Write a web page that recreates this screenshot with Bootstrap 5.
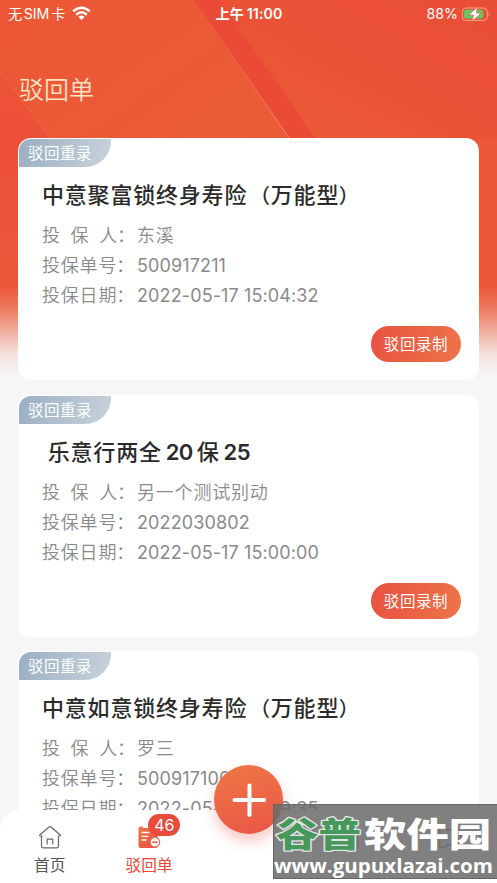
<!DOCTYPE html>
<html lang="zh-CN">
<head>
<meta charset="utf-8">
<meta name="viewport" content="width=device-width, initial-scale=1">
<title>驳回单</title>
<link href="https://cdn.jsdelivr.net/npm/bootstrap@5.3.0/dist/css/bootstrap.min.css" rel="stylesheet">
<style>
body{font-family:Inter,"Noto Sans CJK SC",sans-serif;background:#f6f6f6;overflow:hidden}
.screen{width:497px;height:883px}
.backdrop-art{left:0;top:0;z-index:0}
.layer{z-index:1}
.statusbar{height:27px;padding:0 7px 0 8px;color:#fff;font-size:14.2px;line-height:27px}
.status-side{width:170px}
.sim{word-spacing:-2.2px;letter-spacing:-.1px}
.clock{font-weight:600;word-spacing:-1px;letter-spacing:.1px;line-height:26px}
.page-title{font-size:25px;line-height:36px;font-weight:350;color:#ffe3c5;margin:45px 0 0 19px;padding-bottom:30px}
.orders{padding:0 18px;gap:14.6px}
.order{height:242px;border-radius:13px;width:461px;background:#fff}
.tagline{width:91.5px;height:28px;margin:1px 0 0 1px;padding-left:9px;border-radius:12px 0 26px 0;background:linear-gradient(105deg,#9aafc2,#c9d2dc);color:#fff;font-size:15.5px;letter-spacing:.5px;line-height:30px}
.order-name{height:32px;font-family:"Noto Sans CJK SC",sans-serif;font-size:22px;letter-spacing:.8px;line-height:32px;font-weight:500;color:#2b2b2b;margin:10px 0 0 24px;white-space:pre}
.num{font-family:Inter,sans-serif;font-weight:600;letter-spacing:-.6px;line-height:1;margin:0 4px 0 4px}
.paren-open{font-size:20px;margin-left:2.8px;letter-spacing:.8px}
.paren-close{font-size:20px;margin-left:-.6px}
.order-info{margin:12px 0 0 24px;font-size:18px;line-height:30px;color:#8a8a8a;font-weight:350}
.info-row{height:30px}
.info-key{width:95px;letter-spacing:.8px;white-space:nowrap}
.spread{width:76px}
.colon{margin-left:-1px}
.info-val{font-weight:400;letter-spacing:.12px;white-space:nowrap}
.info-cjk{letter-spacing:.8px;font-weight:350}
.order-info,.order-name,.tagline{flex:none}
.record-btn{width:90px;height:36px;margin:15px 18px 0 0;padding:0;border:0;color:#fff;font-size:15.5px;letter-spacing:.6px;line-height:37px;background:linear-gradient(100deg,#e95141,#ed7448)}
.record-btn:hover{color:#fff}
.tabbar-shade{left:0;bottom:0;width:497px;height:73px;z-index:2;background:#fff;border-radius:20px 20px 0 0}
.tab-item{width:99.4px;padding-top:15px;font-size:15.7px;line-height:22px;color:#555}
.tab-item svg{display:block;margin-bottom:5px}
.tab-item.current{color:#ea4638}
.count-badge{left:49px;top:4px;width:32px;height:22px;border-radius:11px;background:#e94b3c;color:#fff;font-size:16px;line-height:22px;text-align:center}
.add-btn{left:214px;top:765px;width:69px;height:69px;z-index:3;border:0;padding:0;background:linear-gradient(165deg,#ee7744,#ea5548);box-shadow:0 7px 14px rgba(225,75,60,.3)}
.stamp{left:273px;top:804px;z-index:4}
</style>
<script src="https://cdn.jsdelivr.net/npm/bootstrap@5.3.0/dist/js/bootstrap.bundle.min.js"></script>
</head>
<body>
<main class="screen position-relative overflow-hidden">
  <svg class="backdrop-art position-absolute" width="497" height="385" viewBox="0 0 497 385" aria-hidden="true">
    <defs>
      <linearGradient id="base" x1="0" y1="0" x2="0.9" y2="1"><stop offset="0" stop-color="#ed5635"/><stop offset=".45" stop-color="#ea5c38"/><stop offset="1" stop-color="#ea5c3a"/></linearGradient>
      <linearGradient id="right" x1="0" y1="1" x2="1" y2="0"><stop offset="0" stop-color="#ec5f39"/><stop offset=".5" stop-color="#eb5235"/><stop offset="1" stop-color="#e94d38"/></linearGradient>
      <linearGradient id="side" x1="0" y1="0" x2="0" y2="1"><stop offset="0" stop-color="#ed5336"/><stop offset=".3" stop-color="#ec5039"/><stop offset=".7" stop-color="#eb5839"/></linearGradient>
      <linearGradient id="hair" x1="0" y1="0" x2="0" y2="1"><stop offset="0" stop-color="#f08660" stop-opacity="0"/><stop offset="1" stop-color="#f29068"/></linearGradient>
      <linearGradient id="fade" x1="0" y1="0" x2="0" y2="1"><stop offset="0" stop-color="#f6f6f6" stop-opacity="0"/><stop offset=".25" stop-color="#f6f6f6" stop-opacity=".22"/><stop offset=".75" stop-color="#f6f6f6" stop-opacity=".88"/><stop offset="1" stop-color="#f6f6f6"/></linearGradient>
    </defs>
    <rect width="497" height="385" fill="url(#base)"/>
    <path d="M215 0H497V150H325Z" fill="url(#right)"/>
    <path d="M477 138H497V385H477Z" fill="#eb5838"/>
    <path d="M194 0H219L315 138H289Z" fill="#ea4a36"/>
    <path d="M194 0L289 138" stroke="url(#hair)" stroke-width="1"/>
    <path d="M0 71L50 138L18 150V385H0Z" fill="url(#side)"/>
    <path d="M0 71L50 138" stroke="#f17b5c" stroke-width=".8" opacity=".6"/>
    <rect y="287" width="497" height="90" fill="url(#fade)"/>
    <rect y="377" width="497" height="8" fill="#f6f6f6"/>
  </svg>

  <header class="layer position-relative">
    <div class="statusbar d-flex justify-content-between align-items-center">
      <div class="status-side d-flex align-items-center"><span class="sim">无 SIM 卡</span>
        <svg class="ms-1" width="22" height="15" viewBox="-3 0 22 15" fill="none" stroke="#fff" stroke-width="2.5"><path d="M1.2 5.4Q9.5-2 17.8 5.4"/><path d="M4.2 8.7Q9.5 3.9 14.8 8.7"/><path d="M6.4 11Q9.5 8.2 12.6 11L9.5 14Z" fill="#fff" stroke="none"/></svg>
      </div>
      <div class="clock">上午 11:00</div>
      <div class="status-side d-flex align-items-center justify-content-end"><span>88%</span>
        <svg class="ms-1" width="28" height="16" viewBox="0.5 0 28 16"><rect x=".8" y="2" width="25" height="12.4" rx="3.7" fill="none" stroke="#f6a58f"/><path d="M27.2 6Q29 8.2 27.2 10.4Z" fill="#f6a58f"/><rect x="2.6" y="3.8" width="19.2" height="8.8" rx="2" fill="#61ca61"/><path d="M16.2 0.3L7.4 9.2H12L10.2 15.8L19.6 7H14.8Z" fill="#fff" stroke="#e95137" stroke-width=".7"/></svg>
      </div>
    </div>
    <h1 class="page-title mb-0">驳回单</h1>
  </header>

  <section class="orders layer position-relative d-flex flex-column">
    <article class="order flex-shrink-0 d-flex flex-column">
      <div class="tagline">驳回重录</div>
      <h2 class="order-name mb-0">中意聚富锁终身寿险<span class="paren-open">（</span>万能型<span class="paren-close">）</span></h2>
      <div class="order-info">
        <div class="info-row d-flex"><span class="info-key"><span class="spread d-inline-flex justify-content-between"><i class="fst-normal">投</i><i class="fst-normal">保</i><i class="fst-normal">人</i></span><span class="colon">：</span></span><span class="info-val info-cjk">东溪</span></div>
        <div class="info-row d-flex"><span class="info-key">投保单号<span class="colon">：</span></span><span class="info-val">500917211</span></div>
        <div class="info-row d-flex"><span class="info-key">投保日期<span class="colon">：</span></span><span class="info-val">2022-05-17 15:04:32</span></div>
      </div>
      <button class="record-btn btn rounded-pill align-self-end">驳回录制</button>
    </article>
    <article class="order flex-shrink-0 d-flex flex-column">
      <div class="tagline">驳回重录</div>
      <h2 class="order-name mb-0"> 乐意行两全<span class="num">20</span>保<span class="num">25</span></h2>
      <div class="order-info">
        <div class="info-row d-flex"><span class="info-key"><span class="spread d-inline-flex justify-content-between"><i class="fst-normal">投</i><i class="fst-normal">保</i><i class="fst-normal">人</i></span><span class="colon">：</span></span><span class="info-val info-cjk">另一个测试别动</span></div>
        <div class="info-row d-flex"><span class="info-key">投保单号<span class="colon">：</span></span><span class="info-val">2022030802</span></div>
        <div class="info-row d-flex"><span class="info-key">投保日期<span class="colon">：</span></span><span class="info-val">2022-05-17 15:00:00</span></div>
      </div>
      <button class="record-btn btn rounded-pill align-self-end">驳回录制</button>
    </article>
    <article class="order flex-shrink-0 d-flex flex-column">
      <div class="tagline">驳回重录</div>
      <h2 class="order-name mb-0">中意如意锁终身寿险<span class="paren-open">（</span>万能型<span class="paren-close">）</span></h2>
      <div class="order-info">
        <div class="info-row d-flex"><span class="info-key"><span class="spread d-inline-flex justify-content-between"><i class="fst-normal">投</i><i class="fst-normal">保</i><i class="fst-normal">人</i></span><span class="colon">：</span></span><span class="info-val info-cjk">罗三</span></div>
        <div class="info-row d-flex"><span class="info-key">投保单号<span class="colon">：</span></span><span class="info-val">500917100</span></div>
        <div class="info-row d-flex"><span class="info-key">投保日期<span class="colon">：</span></span><span class="info-val">2022-05-17 14:39:35</span></div>
      </div>
    </article>
  </section>

  <nav class="tabbar-shade position-absolute d-flex">
    <div class="tab-item d-flex flex-column align-items-center">
      <svg width="24" height="25" viewBox="0 0 24 25" fill="none" stroke="#666" stroke-width="1.2" stroke-linejoin="round" stroke-linecap="round"><path d="M4 11H2.2Q1 10.7 2 9.7L11 2Q12 1.2 13 2L22 9.7Q23 10.7 21.8 11H20.5V21Q20.5 22.8 18.7 22.8H5.3Q3.5 22.8 3.5 21V11"/><path d="M9.2 19V14.2H14.8V19"/></svg>
      <span>首页</span>
    </div>
    <div class="tab-item current position-relative d-flex flex-column align-items-center">
      <svg width="24" height="25" viewBox="0 0 24 25"><defs><linearGradient id="doc" x2="1" y2="1"><stop stop-color="#ef7847"/><stop offset="1" stop-color="#e94b43"/></linearGradient></defs><rect x="1.5" y="1.5" width="19" height="21.5" rx="2" fill="url(#doc)"/><path d="M6 1H16V3H6Z" fill="#fff"/><path d="M5 7.5H12M5 11.3H11M5 15H9" stroke="#fff" stroke-width="1.3" stroke-linecap="round"/><circle cx="17.9" cy="17.2" r="4.8" fill="#fff" stroke="#ec654a" stroke-width="1.2"/><path d="M15.3 17.2H20.5" stroke="#ec5545" stroke-width="1.7"/></svg>
      <span>驳回单</span>
      <span class="count-badge position-absolute">46</span>
    </div>
  </nav>

  <button class="add-btn position-absolute rounded-circle" aria-label="新增"><svg width="34" height="34" viewBox="0 0 34 34" stroke="#fff" stroke-width="4" stroke-linecap="round"><path d="M17.5 2.5V32M2.5 17H32"/></svg></button>

  <svg class="stamp position-absolute" width="224" height="76" viewBox="0 0 224 76">
    <rect x=".5" y=".5" width="224" height="74" fill="#6a6a6a" fill-opacity=".85" stroke="#666"/>
    <g fill="none" stroke="#6e6e6e" stroke-width="1.3"><rect x="64" y="24" width="21" height="21" rx="4"/><path d="M171 22L174 26H178L181 22L186 25L185 30L188 33L185 37L186 42L181 44L178 41H174L171 44L166 42L167 37L164 33L167 30L166 25Z"/></g>
    <path d="M0 76H224" stroke="#fff" stroke-width="2"/>
    <g font-family="'Noto Sans CJK SC',sans-serif" font-weight="900" font-size="34" paint-order="stroke" stroke-linejoin="round">
      <text x="3" y="43" textLength="85" lengthAdjust="spacingAndGlyphs" fill="#46985c" stroke="#e4e4e4" stroke-width="2.6">谷普</text>
      <text x="91" y="43" textLength="127" lengthAdjust="spacingAndGlyphs" fill="#fff">软件园</text>
    </g>
    <text x="1" y="69" textLength="219" lengthAdjust="spacingAndGlyphs" font-family="'Open Sans',sans-serif" font-weight="700" font-size="19.5" fill="#fff">www.gupuxlazai.com</text>
  </svg>
</main>
</body>
</html>
